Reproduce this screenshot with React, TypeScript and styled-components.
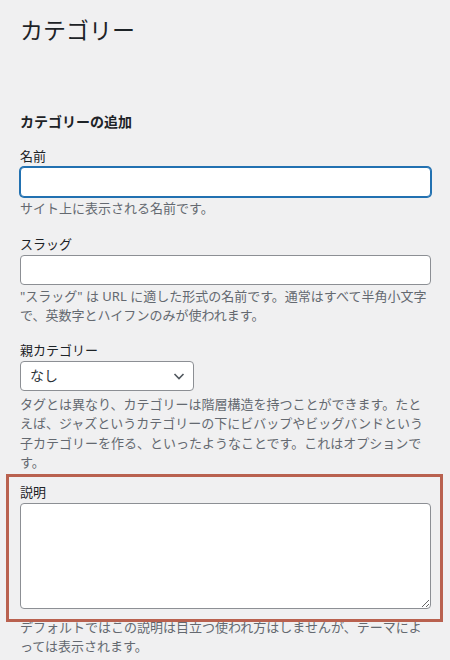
import React from 'react'
import styled, { createGlobalStyle } from 'styled-components'

const GlobalStyle = createGlobalStyle`
  html, body {
    margin: 0;
    padding: 0;
    background: #f0f0f1;
  }

  body {
    font-family: "Noto Sans", "Noto Sans CJK JP", sans-serif;
    color: #1d2327;
  }
`

const Page = styled.div`
  position: relative;
  width: 450px;
  height: 660px;
  overflow: hidden;
  padding: 0 19px 0 20px;
  box-sizing: border-box;
`

const Title = styled.h1`
  margin: 15px 0 0;
  font-size: 23px;
  font-weight: 400;
  line-height: 30px;
  color: #1d2327;
`

const SectionTitle = styled.h2`
  margin: 67px 0 0;
  font-size: 14px;
  font-weight: 700;
  line-height: 20px;
  color: #1d2327;
`

const Field = styled.div<{ $gap: number }>`
  margin-top: ${p => p.$gap}px;
`

const Label = styled.label`
  display: block;
  margin-bottom: 2px;
  font-size: 13px;
  line-height: 18px;
  color: #1d2327;
`

const TextInput = styled.input<{ $focused?: boolean }>`
  display: block;
  width: 100%;
  height: 30px;
  margin: 0;
  padding: 0 8px;
  box-sizing: border-box;
  background: #fff;
  border: 1px solid ${p => (p.$focused ? '#2271b1' : '#8c8f94')};
  border-radius: 4px;
  box-shadow: ${p => (p.$focused ? '0 0 0 1px #2271b1' : 'none')};
  outline: none;
  font-family: inherit;
  font-size: 14px;
`

const Help = styled.p<{ $top?: number }>`
  margin: ${p => p.$top ?? 2}px 0 0;
  font-size: 13px;
  line-height: 19.5px;
  color: #646970;
`

const SelectWrap = styled.div`
  position: relative;
  width: 174px;
`

const Select = styled.select`
  display: block;
  width: 100%;
  height: 30px;
  margin: 0;
  padding: 0 24px 0 9px;
  box-sizing: border-box;
  appearance: none;
  background: #fff;
  border: 1px solid #8c8f94;
  border-radius: 4px;
  font-family: inherit;
  font-size: 14px;
  color: #2c3338;
`

const Chevron = styled.svg`
  position: absolute;
  right: 8px;
  top: 8px;
  pointer-events: none;
`

const TextArea = styled.textarea`
  display: block;
  width: 100%;
  height: 106px;
  margin: 0;
  padding: 6px 8px;
  box-sizing: border-box;
  background: #fff;
  border: 1px solid #8c8f94;
  border-radius: 4px;
  font-family: inherit;
  font-size: 14px;
`

const Highlight = styled.div`
  position: absolute;
  left: 6px;
  top: 474px;
  width: 437px;
  height: 148px;
  box-sizing: border-box;
  border: 3px solid #b9614f;
  pointer-events: none;
`

export default function App() {
  return (
    <>
      <GlobalStyle />
      <Page>
        <Title>カテゴリー</Title>
        <SectionTitle>カテゴリーの追加</SectionTitle>

        <Field $gap={15}>
          <Label htmlFor="tag-name">名前</Label>
          <TextInput id="tag-name" type="text" $focused />
          <Help>サイト上に表示される名前です。</Help>
        </Field>

        <Field $gap={16}>
          <Label htmlFor="tag-slug">スラッグ</Label>
          <TextInput id="tag-slug" type="text" />
          <Help>
            "スラッグ" は URL に適した形式の名前です。通常はすべて半角小文字で、英数字とハイフンのみが使われます。
          </Help>
        </Field>

        <Field $gap={15}>
          <Label htmlFor="parent">親カテゴリー</Label>
          <SelectWrap>
            <Select id="parent" defaultValue="none">
              <option value="none">なし</option>
            </Select>
            <Chevron width="14" height="14" viewBox="0 0 14 14" fill="none">
              <path d="M2.5 5l4.5 4.5L11.5 5" stroke="#50575e" strokeWidth="1.6" />
            </Chevron>
          </SelectWrap>
          <Help $top={4}>
            タグとは異なり、カテゴリーは階層構造を持つことができます。たとえば、ジャズというカテゴリーの下にビバップやビッグバンドという子カテゴリーを作る、といったようなことです。これはオプションです。
          </Help>
        </Field>

        <Field $gap={10}>
          <Label htmlFor="tag-description">説明</Label>
          <TextArea id="tag-description" rows={5} />
          <Help $top={9}>
            デフォルトではこの説明は目立つ使われ方はしませんが、テーマによっては表示されます。
          </Help>
        </Field>

        <Highlight />
      </Page>
    </>
  )
}
